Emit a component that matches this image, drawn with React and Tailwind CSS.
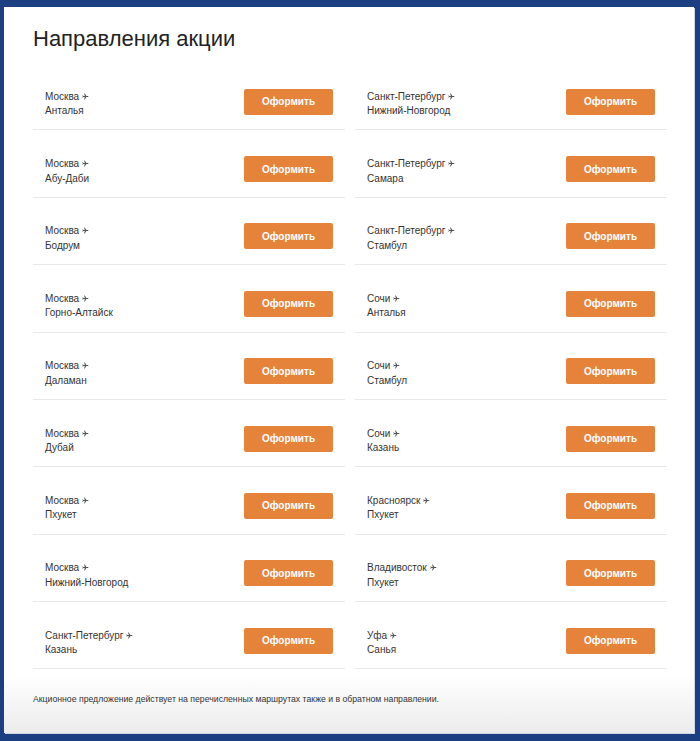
import React from 'react';

const left = [
  ['Москва', 'Анталья'],
  ['Москва', 'Абу-Даби'],
  ['Москва', 'Бодрум'],
  ['Москва', 'Горно-Алтайск'],
  ['Москва', 'Даламан'],
  ['Москва', 'Дубай'],
  ['Москва', 'Пхукет'],
  ['Москва', 'Нижний-Новгород'],
  ['Санкт-Петербург', 'Казань'],
];

const right = [
  ['Санкт-Петербург', 'Нижний-Новгород'],
  ['Санкт-Петербург', 'Самара'],
  ['Санкт-Петербург', 'Стамбул'],
  ['Сочи', 'Анталья'],
  ['Сочи', 'Стамбул'],
  ['Сочи', 'Казань'],
  ['Красноярск', 'Пхукет'],
  ['Владивосток', 'Пхукет'],
  ['Уфа', 'Санья'],
];

function Plane() {
  return (
    <svg width="7" height="7" viewBox="0 0 24 24" className="inline-block ml-[3px] align-[0px]" fill="#555">
      <path d="M22 12c0-.9-.8-1.5-1.7-1.5H15L9.5 2H7l2.8 8.5H5L3.2 8H1.5l1.2 4-1.2 4h1.7L5 13.5h4.8L7 22h2.5l5.5-8.5h5.3c.9 0 1.7-.6 1.7-1.5z" />
    </svg>
  );
}

function Row({ from, to }) {
  return (
    <div className="h-[67.375px] border-b border-[#e9e9e9] flex items-center justify-between px-3 pt-[11px]">
      <div className="text-[10px] leading-[14.5px] text-[#333] pt-[5px]">
        <div>
          {from}
          <Plane />
        </div>
        <div>{to}</div>
      </div>
      <button className="w-[89px] h-[26px] rounded-[2px] bg-[#e6833a] text-white text-[10px] font-bold">
        Оформить
      </button>
    </div>
  );
}

export default function App() {
  return (
    <div className="w-[700px] h-[741px] bg-[#1b3f80] pt-[7px] pl-[4px] pr-[6px] pb-[8px]" style={{ fontFamily: '"Liberation Sans", Arial, sans-serif' }}>
      <div className="h-full bg-gradient-to-b from-white from-[92%] to-[#ececec] pl-[29px] pr-[27px] pt-[18px] shadow-[1px_1px_0_#cfd6e2]">
        <h1 className="text-[22px] leading-[28px] text-[#222] font-normal">Направления акции</h1>
        <div className="grid grid-cols-2 gap-x-[10px] mt-[10px]">
          <div>
            {left.map((r, i) => (
              <Row key={i} from={r[0]} to={r[1]} />
            ))}
          </div>
          <div>
            {right.map((r, i) => (
              <Row key={i} from={r[0]} to={r[1]} />
            ))}
          </div>
        </div>
        <p className="mt-[24px] text-[8.7px] leading-[12px] text-[#333]">
          Акционное предложение действует на перечисленных маршрутах также и в обратном направлении.
        </p>
      </div>
    </div>
  );
}
